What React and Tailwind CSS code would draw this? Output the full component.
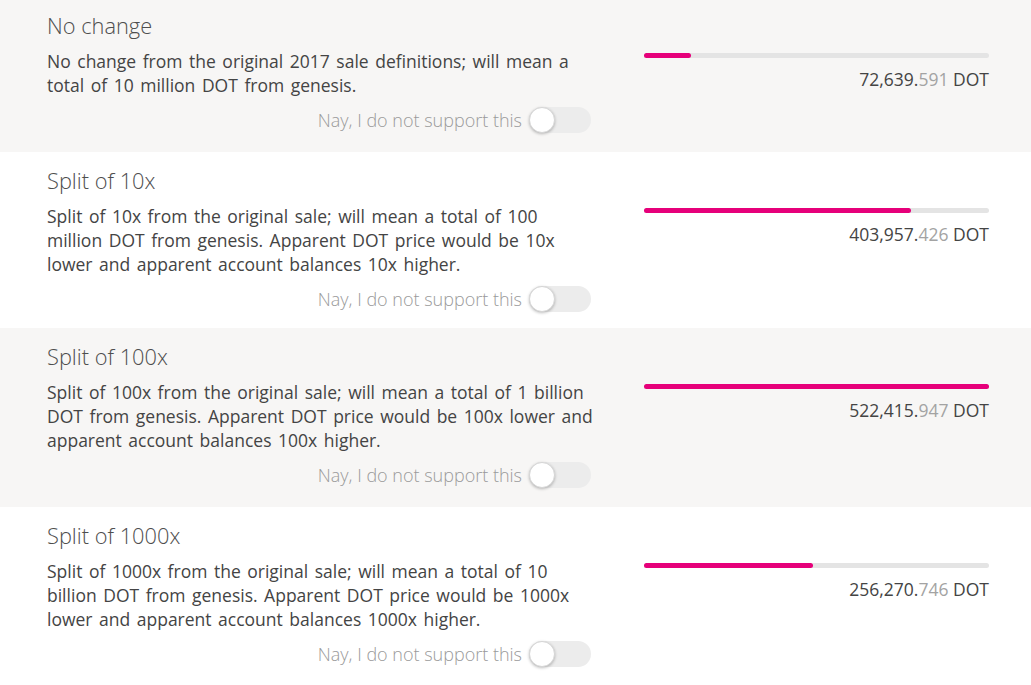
const options = [
  {
    title: 'No change',
    text: 'No change from the original 2017 sale definitions; will mean a total of 10 million DOT from genesis.',
    whole: '72,639',
    frac: '591',
    pct: 13.5,
  },
  {
    title: 'Split of 10x',
    text: 'Split of 10x from the original sale; will mean a total of 100 million DOT from genesis. Apparent DOT price would be 10x lower and apparent account balances 10x higher.',
    whole: '403,957',
    frac: '426',
    pct: 77.3,
  },
  {
    title: 'Split of 100x',
    text: 'Split of 100x from the original sale; will mean a total of 1 billion DOT from genesis. Apparent DOT price would be 100x lower and apparent account balances 100x higher.',
    whole: '522,415',
    frac: '947',
    pct: 100,
  },
  {
    title: 'Split of 1000x',
    text: 'Split of 1000x from the original sale; will mean a total of 10 billion DOT from genesis. Apparent DOT price would be 1000x lower and apparent account balances 1000x higher.',
    whole: '256,270',
    frac: '746',
    pct: 49,
  },
];

function Toggle() {
  return (
    <div className="relative h-[26px] w-[62px] rounded-full bg-[#ececec]">
      <div className="absolute left-0 top-0 h-[26px] w-[26px] rounded-full border border-[#d6d6d6] bg-white shadow-[0_1px_3px_rgba(0,0,0,0.25)]" />
    </div>
  );
}

function OptionRow({ opt, shaded }) {
  return (
    <div className={`flex pl-[47px] pr-[42px] pt-[14px] ${shaded ? 'bg-[#f7f6f5] pb-[19px]' : 'bg-white pb-[16px]'}`}>
      <div className="w-[548px]">
        <div className="text-[21.8px] font-light leading-[30px] text-[#4e4e4e]">{opt.title}</div>
        <div className="mt-[8px] text-[17.5px] leading-[24px] text-[#444] [word-spacing:2px]">{opt.text}</div>
        <div className="mt-[10px] flex items-center justify-end gap-[7px] pr-[4px]">
          <span className="text-[18px] font-light leading-[26px] text-[#9a9a9a]">Nay, I do not support this</span>
          <Toggle />
        </div>
      </div>
      <div className="ml-auto w-[345px] pt-[42px]">
        <div className="h-[5px] w-full rounded-full bg-[#e4e4e4]">
          <div className="h-[5px] rounded-full bg-[#e6007a]" style={{ width: `${opt.pct}%` }} />
        </div>
        <div className="mt-[9px] text-right text-[17.5px] leading-[24px] text-[#444]">
          {opt.whole}.<span className="text-[#a3a3a3]">{opt.frac}</span> DOT
        </div>
      </div>
    </div>
  );
}

export default function App() {
  return (
    <div className="h-[685px] overflow-hidden bg-white font-['Open_Sans',sans-serif]">
      <div className="-mt-[3px]">
        {options.map((opt, i) => (
          <OptionRow key={opt.title} opt={opt} shaded={i % 2 === 0} />
        ))}
      </div>
    </div>
  );
}
